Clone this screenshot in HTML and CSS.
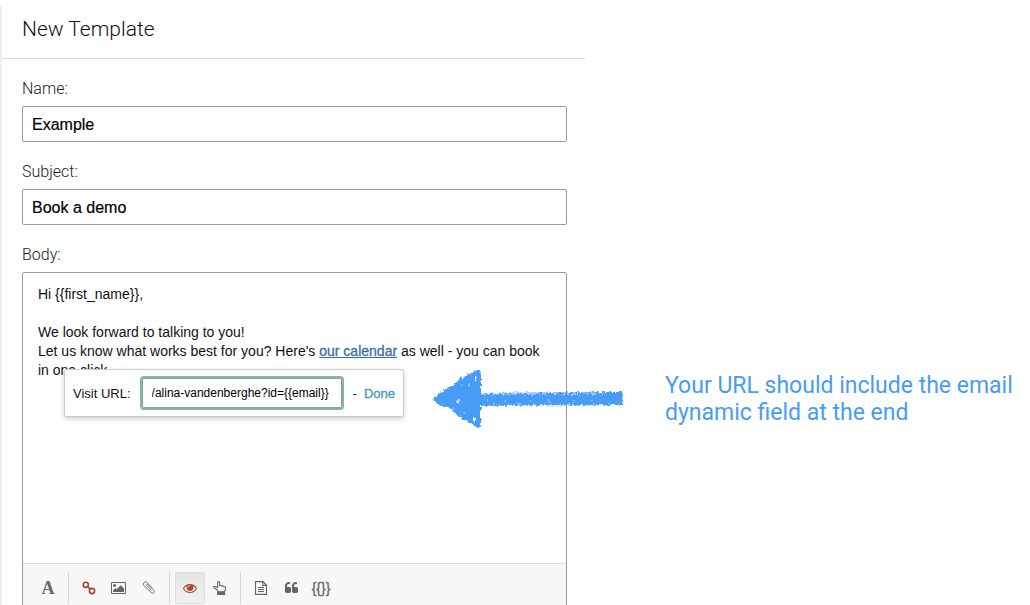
FILE: index.html
```html
<!DOCTYPE html>
<html lang="en">
<head>
  <meta charset="UTF-8">
  <meta name="viewport" content="width=device-width, initial-scale=1.0">
  <title>New Template</title>
  <link rel="stylesheet" href="styles.css">
</head>
<body>
  <div class="page">

    <!-- Template form -->
    <main class="panel">
      <h1 class="panel-title">New Template</h1>

      <form class="template-form">
        <label class="field-label" for="name">Name:</label>
        <input class="field-input" id="name" type="text" value="Example">

        <label class="field-label" for="subject">Subject:</label>
        <input class="field-input" id="subject" type="text" value="Book a demo">

        <div class="field-label" id="bodyLabel">Body:</div>
        <div class="editor">
          <div class="editor-content" contenteditable="true" role="textbox" aria-multiline="true" aria-labelledby="bodyLabel" spellcheck="false">
            <p>Hi {{first_name}},</p>
            <p><br></p>
            <p>We look forward to talking to you!</p>
            <p>Let us know what works best for you? Here's <a href="#">our calendar</a> as well - you can book in one click.</p>
          </div>

          <div class="link-popup">
            <label for="url">Visit URL:</label>
            <input class="url-input" id="url" type="text" value="/alina-vandenberghe?id={{email}}">
            <span>-</span>
            <a class="done" href="#">Done</a>
          </div>

          <div class="toolbar">
            <button type="button" class="tool tool-font" aria-label="Font">A</button>
            <span class="separator"></span>
            <button type="button" class="tool tool-red" aria-label="Link">
              <svg width="14" height="14" viewBox="0 0 14 14" fill="none" stroke="currentColor" stroke-width="1.6">
                <circle cx="3.8" cy="3.8" r="2.6"/>
                <circle cx="10" cy="10" r="2.6"/>
                <path d="M5.2 5.4 8.7 8.7"/>
              </svg>
            </button>
            <button type="button" class="tool" aria-label="Image">
              <svg width="16" height="14" viewBox="-64 0 2048 1792" fill="currentColor">
                <path d="M576 576q0 80-56 136t-136 56-136-56-56-136 56-136 136-56 136 56 56 136zm1024 384v448h-1408v-192l320-320 160 160 512-512zm96-704h-1600q-13 0-22.500 9.500t-9.500 22.500v1216q0 13 9.500 22.500t22.500 9.500h1600q13 0 22.500-9.500t9.500-22.500v-1216q0-13-9.500-22.500t-22.500-9.500zm160 32v1216q0 66-47 113t-113 47h-1600q-66 0-113-47t-47-113v-1216q0-66 47-113t113-47h1600q66 0 113 47t47 113z"/>
              </svg>
            </button>
            <button type="button" class="tool" aria-label="Attachment">
              <svg width="14" height="14" viewBox="0 0 14 14" fill="none" stroke="currentColor" stroke-width="0.9" stroke-linecap="round">
                <path d="M9 8.800 4.900 4.700C3.900 3.700 5 2.500 6.100 3.500L11.400 8.800C13.700 11.100 11.100 13.700 8.800 11.400L2.200 4.800C-.2 2.400 2.900-.5 5.200 1.800L10.400 7"/>
              </svg>
            </button>
            <span class="separator"></span>
            <button type="button" class="tool tool-red active" aria-label="Preview">
              <svg width="14" height="14" viewBox="0 0 1792 1792" fill="currentColor">
                <path d="M1664 960q-152-236-381-353 61 104 61 225 0 185-131.500 316.500t-316.500 131.500-316.500-131.500-131.500-316.500q0-121 61-225-229 117-381 353 133 205 333.500 326.500t434.500 121.500 434.500-121.500 333.500-326.500zm-720-384q0-20-14-34t-34-14q-125 0-214.500 89.500t-89.500 214.500q0 20 14 34t34 14 34-14 14-34q0-86 61-147t147-61q20 0 34-14t14-34zm848 384q0 34-20 69-140 230-376.500 368.500t-499.500 138.500-499.500-139-376.500-368q-20-35-20-69t20-69q140-229 376.500-368t499.500-139 499.500 139 376.500 368q20 35 20 69z"/>
              </svg>
            </button>
            <button type="button" class="tool" aria-label="Call to action">
              <svg width="14" height="14" viewBox="0 0 14 14" fill="none" stroke="currentColor" stroke-width="1.1" stroke-linejoin="round">
                <path d="M4.600 10.800V9L1.200 7C.2 6 1.300 4.800 2.500 5.500L4.600 6.600V1.800C4.600.2 6.700.2 6.700 1.800V4.700C7.500 4.100 8.500 4.400 8.800 5.100C9.600 4.700 10.400 5 10.700 5.600C11.800 5.200 12.600 5.800 12.600 7C12.600 8.500 11.600 9.500 11.600 10.800"/>
                <path d="M4.600 10.800H11.600V13.400H4.600Z" fill="currentColor"/>
              </svg>
            </button>
            <span class="separator"></span>
            <button type="button" class="tool" aria-label="Templates">
              <svg width="14" height="14" viewBox="0 0 14 14" fill="none" stroke="currentColor" stroke-width="1.1">
                <path d="M1.500.6H9L12.500 4.100V13.400H1.500ZM8.700.6V4.400H12.500M4 6.500H10M4 8.500H10M4 10.500H10"/>
              </svg>
            </button>
            <button type="button" class="tool" aria-label="Snippet">
              <svg width="15" height="14" viewBox="0 0 1792 1792" fill="currentColor">
                <path d="M832 960v384q0 80-56 136t-136 56h-384q-80 0-136-56t-56-136v-704q0-104 40.500-198.500t109.500-163.500 163.500-109.500 198.500-40.500h64q26 0 45 19t19 45v128q0 26-19 45t-45 19h-64q-106 0-181 75t-75 181v32q0 40 28 68t68 28h224q80 0 136 56t56 136zm896 0v384q0 80-56 136t-136 56h-384q-80 0-136-56t-56-136v-704q0-104 40.500-198.500t109.500-163.500 163.500-109.500 198.500-40.500h64q26 0 45 19t19 45v128q0 26-19 45t-45 19h-64q-106 0-181 75t-75 181v32q0 40 28 68t68 28h224q80 0 136 56t56 136z"/>
              </svg>
            </button>
            <button type="button" class="tool tool-vars" aria-label="Dynamic field">{{}}</button>
          </div>
        </div>
      </form>
    </main>

    <!-- Annotation -->
    <aside class="note">
      <svg class="arrow" width="196" height="66" viewBox="0 0 196 66">
        <defs>
          <filter id="rough" x="-5%" y="-10%" width="110%" height="120%">
            <feTurbulence type="fractalNoise" baseFrequency="0.35" numOctaves="2" seed="4" result="noise"/>
            <feDisplacementMap in="SourceGraphic" in2="noise" scale="5" xChannelSelector="R" yChannelSelector="G"/>
          </filter>
        </defs>
        <g filter="url(#rough)">
          <path d="M2 32 9 26 22 18 29 12 46 3 50 5V26L192 25 193 29 191 38 50 39V60L47 61 29 50 20 42 8 38Z" fill="#479cf7"/>
          <g fill="#fff">
            <ellipse cx="45" cy="11" rx="1" ry="2.500"/>
            <ellipse cx="43" cy="52" rx="1" ry="2.500"/>
            <circle cx="27" cy="34" r="1.800"/>
            <circle cx="38" cy="18" r=".7"/>
            <circle cx="31" cy="19" r=".7"/>
            <circle cx="22" cy="42" r=".7"/>
            <circle cx="33" cy="46" r=".7"/>
          </g>
          <!-- chalk specks along the shaft -->
          <g fill="none" stroke="#fff">
            <path d="M51 27H172" stroke-width="1.200" stroke-dasharray="3 2 2 3 4 2 1 3"/>
            <path d="M56 34H180" stroke-width=".8" stroke-dasharray="1 17 2 23"/>
            <path d="M52 37H190" stroke-width=".8" stroke-dasharray="1 9 2 13"/>
          </g>
        </g>
      </svg>
      <p>Your URL should include the email dynamic field at the end</p>
    </aside>

  </div>
</body>
</html>
```
FILE: styles.css
```css
* {
  box-sizing: border-box;
}

body {
  margin: 0;
  background: #fff;
  color: #111;
  font-family: "Liberation Sans", Arial, sans-serif;
  font-size: 14px;
}

.page {
  display: grid;
  grid-template-columns: 585fr 445fr;
  height: 100vh;
  padding-top: 6px;
  overflow: hidden;
}

.panel {
  border-left: 2px solid #eee;
}

.panel-title {
  margin: 0;
  padding: 8px 20px 13px;
  border-bottom: 1px solid #d9d9d9;
  font-family: Roboto, sans-serif;
  font-size: 21px;
  font-weight: 300;
  line-height: 31px;
}

.template-form {
  padding: 20px 18px 0 20px;
}

.field-label {
  display: block;
  margin-bottom: 7px;
  color: #222;
  font-family: Roboto, sans-serif;
  font-size: 16px;
  font-weight: 300;
  line-height: 20px;
}

.field-input {
  display: block;
  width: 100%;
  height: 36px;
  margin: 0 0 20px;
  padding: 2px 9px 0;
  border: 1px solid #999;
  border-radius: 2px;
  color: #000;
  font-family: inherit;
  font-size: 16px;
  -webkit-text-stroke: 0.2px;
}

/* Editor */
.editor {
  position: relative;
  border: 1px solid #999;
  border-radius: 2px;
}

.editor-content {
  min-height: 290px;
  padding: 12px 15px;
  line-height: 19px;
  outline: none;
}

.editor-content p {
  margin: 0;
}

.editor-content a {
  color: #3a6ea8;
  -webkit-text-stroke: 0.3px;
}

.link-popup {
  position: absolute;
  top: 96px;
  left: 41px;
  display: flex;
  align-items: center;
  padding: 8px;
  border: 1px solid #ccc;
  border-radius: 3px;
  background: #fff;
  box-shadow: 0 2px 5px rgba(0, 0, 0, 0.2);
  font-size: 13px;
}

.url-input {
  width: 200px;
  height: 30px;
  margin: 0 11px;
  padding: 0 9px;
  border: 1px solid #999;
  border-radius: 2px;
  outline: 2px solid #7fb8a9;
  color: #000;
  font-family: inherit;
  font-size: 12px;
}

.done {
  margin-left: 7px;
  color: #3a9bbd;
  text-decoration: none;
  -webkit-text-stroke: 0.3px;
}

/* Toolbar */
.toolbar {
  display: flex;
  padding: 8px 10px;
  border-top: 1px solid #ddd;
  background: #f7f7f7;
}

.tool {
  display: flex;
  align-items: center;
  justify-content: center;
  width: 30px;
  height: 32px;
  padding: 0;
  border: 1px solid transparent;
  border-radius: 2px;
  background: none;
  color: #666;
  cursor: pointer;
}

.tool-red {
  color: #a9452f;
}

.tool.active {
  border-color: #ddd;
  background: linear-gradient(#e6e6e6, #f0f0f0);
}

.tool-font {
  font-family: "Liberation Serif", serif;
  font-size: 18px;
  font-weight: bold;
}

.tool-vars {
  font-family: inherit;
  font-size: 14px;
  -webkit-text-stroke: 0.3px;
}

.separator {
  width: 1px;
  margin: 0 5px;
  background: #d5d5d5;
}

/* Annotation */
.note {
  position: relative;
  padding: 366px 10px 0 80px;
  color: #479cf7;
  font-family: Roboto, sans-serif;
  font-size: 23px;
  line-height: 27px;
}

.note p {
  margin: 0;
}

.arrow {
  position: absolute;
  top: 361px;
  left: -154px;
}
```
